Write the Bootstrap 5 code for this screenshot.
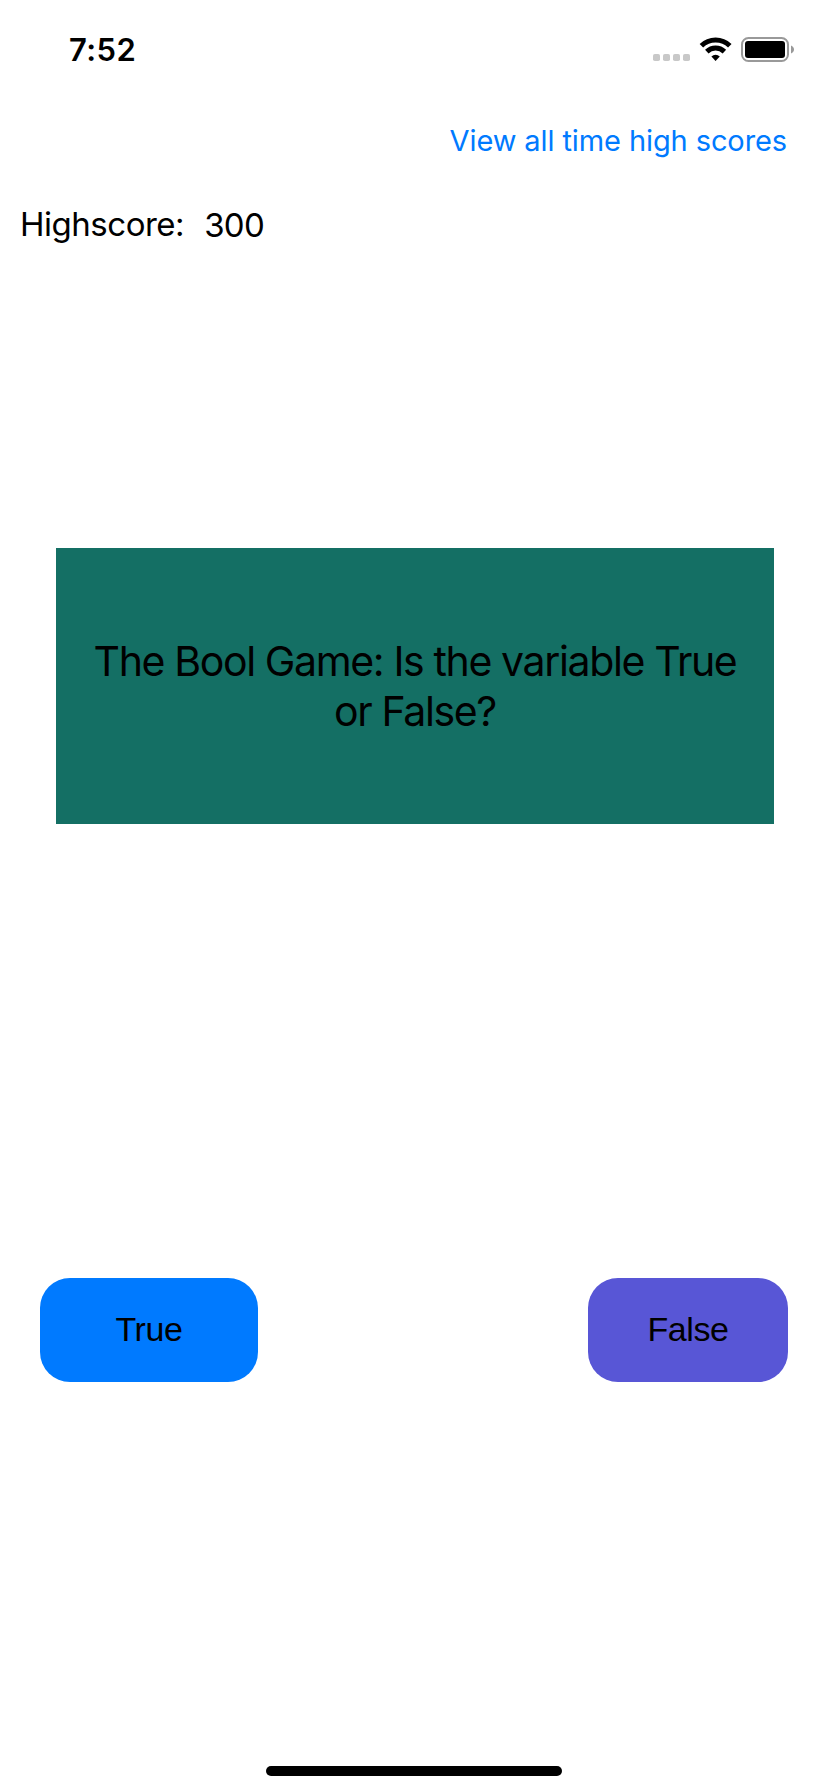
<!DOCTYPE html>
<html lang="en">
<head>
<meta charset="utf-8">
<meta name="viewport" content="width=device-width, initial-scale=1">
<title>The Bool Game</title>
<link href="https://cdn.jsdelivr.net/npm/bootstrap@5.3.0/dist/css/bootstrap.min.css" rel="stylesheet">
<style>
body{font-family:Inter,"Liberation Sans",sans-serif;color:#000;background:#fff}
.status-bar{height:100px;padding:0 33px 0 69px}
.clock{font-size:31px;font-weight:600;line-height:100px;letter-spacing:.45px}
.status-bar svg{display:block}
.scores-link{font-size:29px;line-height:40px;letter-spacing:-.1px;color:#007aff;padding:0;border:0}
.links-row{height:80px;padding:21px 41px 0 0}
.score-row{height:88px;padding:24px 0 0 20px;font-size:33px;line-height:40px;letter-spacing:-.48px}
.score-value{margin:1px 0 0 20px;letter-spacing:-.7px}
.question{margin:280px 54px 0 56px;height:276px;background:#146f64;font-size:41px;line-height:50px;letter-spacing:-1.37px}
.answers{margin-top:454px;padding:0 40px}
.answer{height:104px;border-radius:30px;font:34px/40px "Liberation Sans",sans-serif;letter-spacing:-.4px;border:0;padding:0 0 2px}
.answer,.answer:hover{color:#000}
.answer-true,.answer-true:hover{width:218px;background:#007aff}
.answer-false,.answer-false:hover{width:200px;background:#5856d6}
.home-bar{width:296px;height:10px;border-radius:5px;margin-bottom:16px}
</style>
</head>
<body>
<div class="d-flex flex-column vh-100 overflow-hidden">
  <header class="status-bar d-flex justify-content-between align-items-center">
    <div class="clock">7:52</div>
    <svg width="142" height="30" viewBox="0 0 142 30" aria-hidden="true">
      <g fill="#c8c8c8"><rect x="0" y="19" width="7" height="7" rx="1.8"/><rect x="10" y="19" width="7" height="7" rx="1.8"/><rect x="20" y="19" width="7" height="7" rx="1.8"/><rect x="30" y="19" width="7" height="7" rx="1.8"/></g>
      <g fill="none" stroke="#000" stroke-width="5"><path d="M48.400 10.700a20.300 20.300 0 0 1 28.400 0"/><path d="M53.800 16.600a12.700 12.700 0 0 1 17.600 0"/></g>
      <path d="M62.600 26l-4.200-4.600a6 6 0 0 1 8.400 0z"/>
      <rect x="89" y="3" width="46" height="23" rx="6.5" fill="none" stroke="#999" stroke-width="2"/>
      <rect x="92" y="6" width="40" height="17" rx="3"/>
      <path d="M138 10.500c4 1.500 4 6.500 0 8z" fill="#999"/>
    </svg>
  </header>
  <div class="links-row d-flex justify-content-end"><a class="btn btn-link scores-link text-decoration-none align-self-start" href="#">View all time high scores</a></div>
  <div class="score-row d-flex"><span>Highscore:</span><span class="score-value">300</span></div>
  <main class="question d-flex flex-column align-items-center justify-content-center text-center"><span>The Bool Game: Is the variable True</span><span>or False?</span></main>
  <div class="answers d-flex justify-content-between">
    <button type="button" class="btn answer answer-true">True</button>
    <button type="button" class="btn answer answer-false">False</button>
  </div>
  <div class="home-bar bg-black mx-auto mt-auto"></div>
</div>
<script src="https://cdn.jsdelivr.net/npm/bootstrap@5.3.0/dist/js/bootstrap.bundle.min.js"></script>
</body>
</html>
